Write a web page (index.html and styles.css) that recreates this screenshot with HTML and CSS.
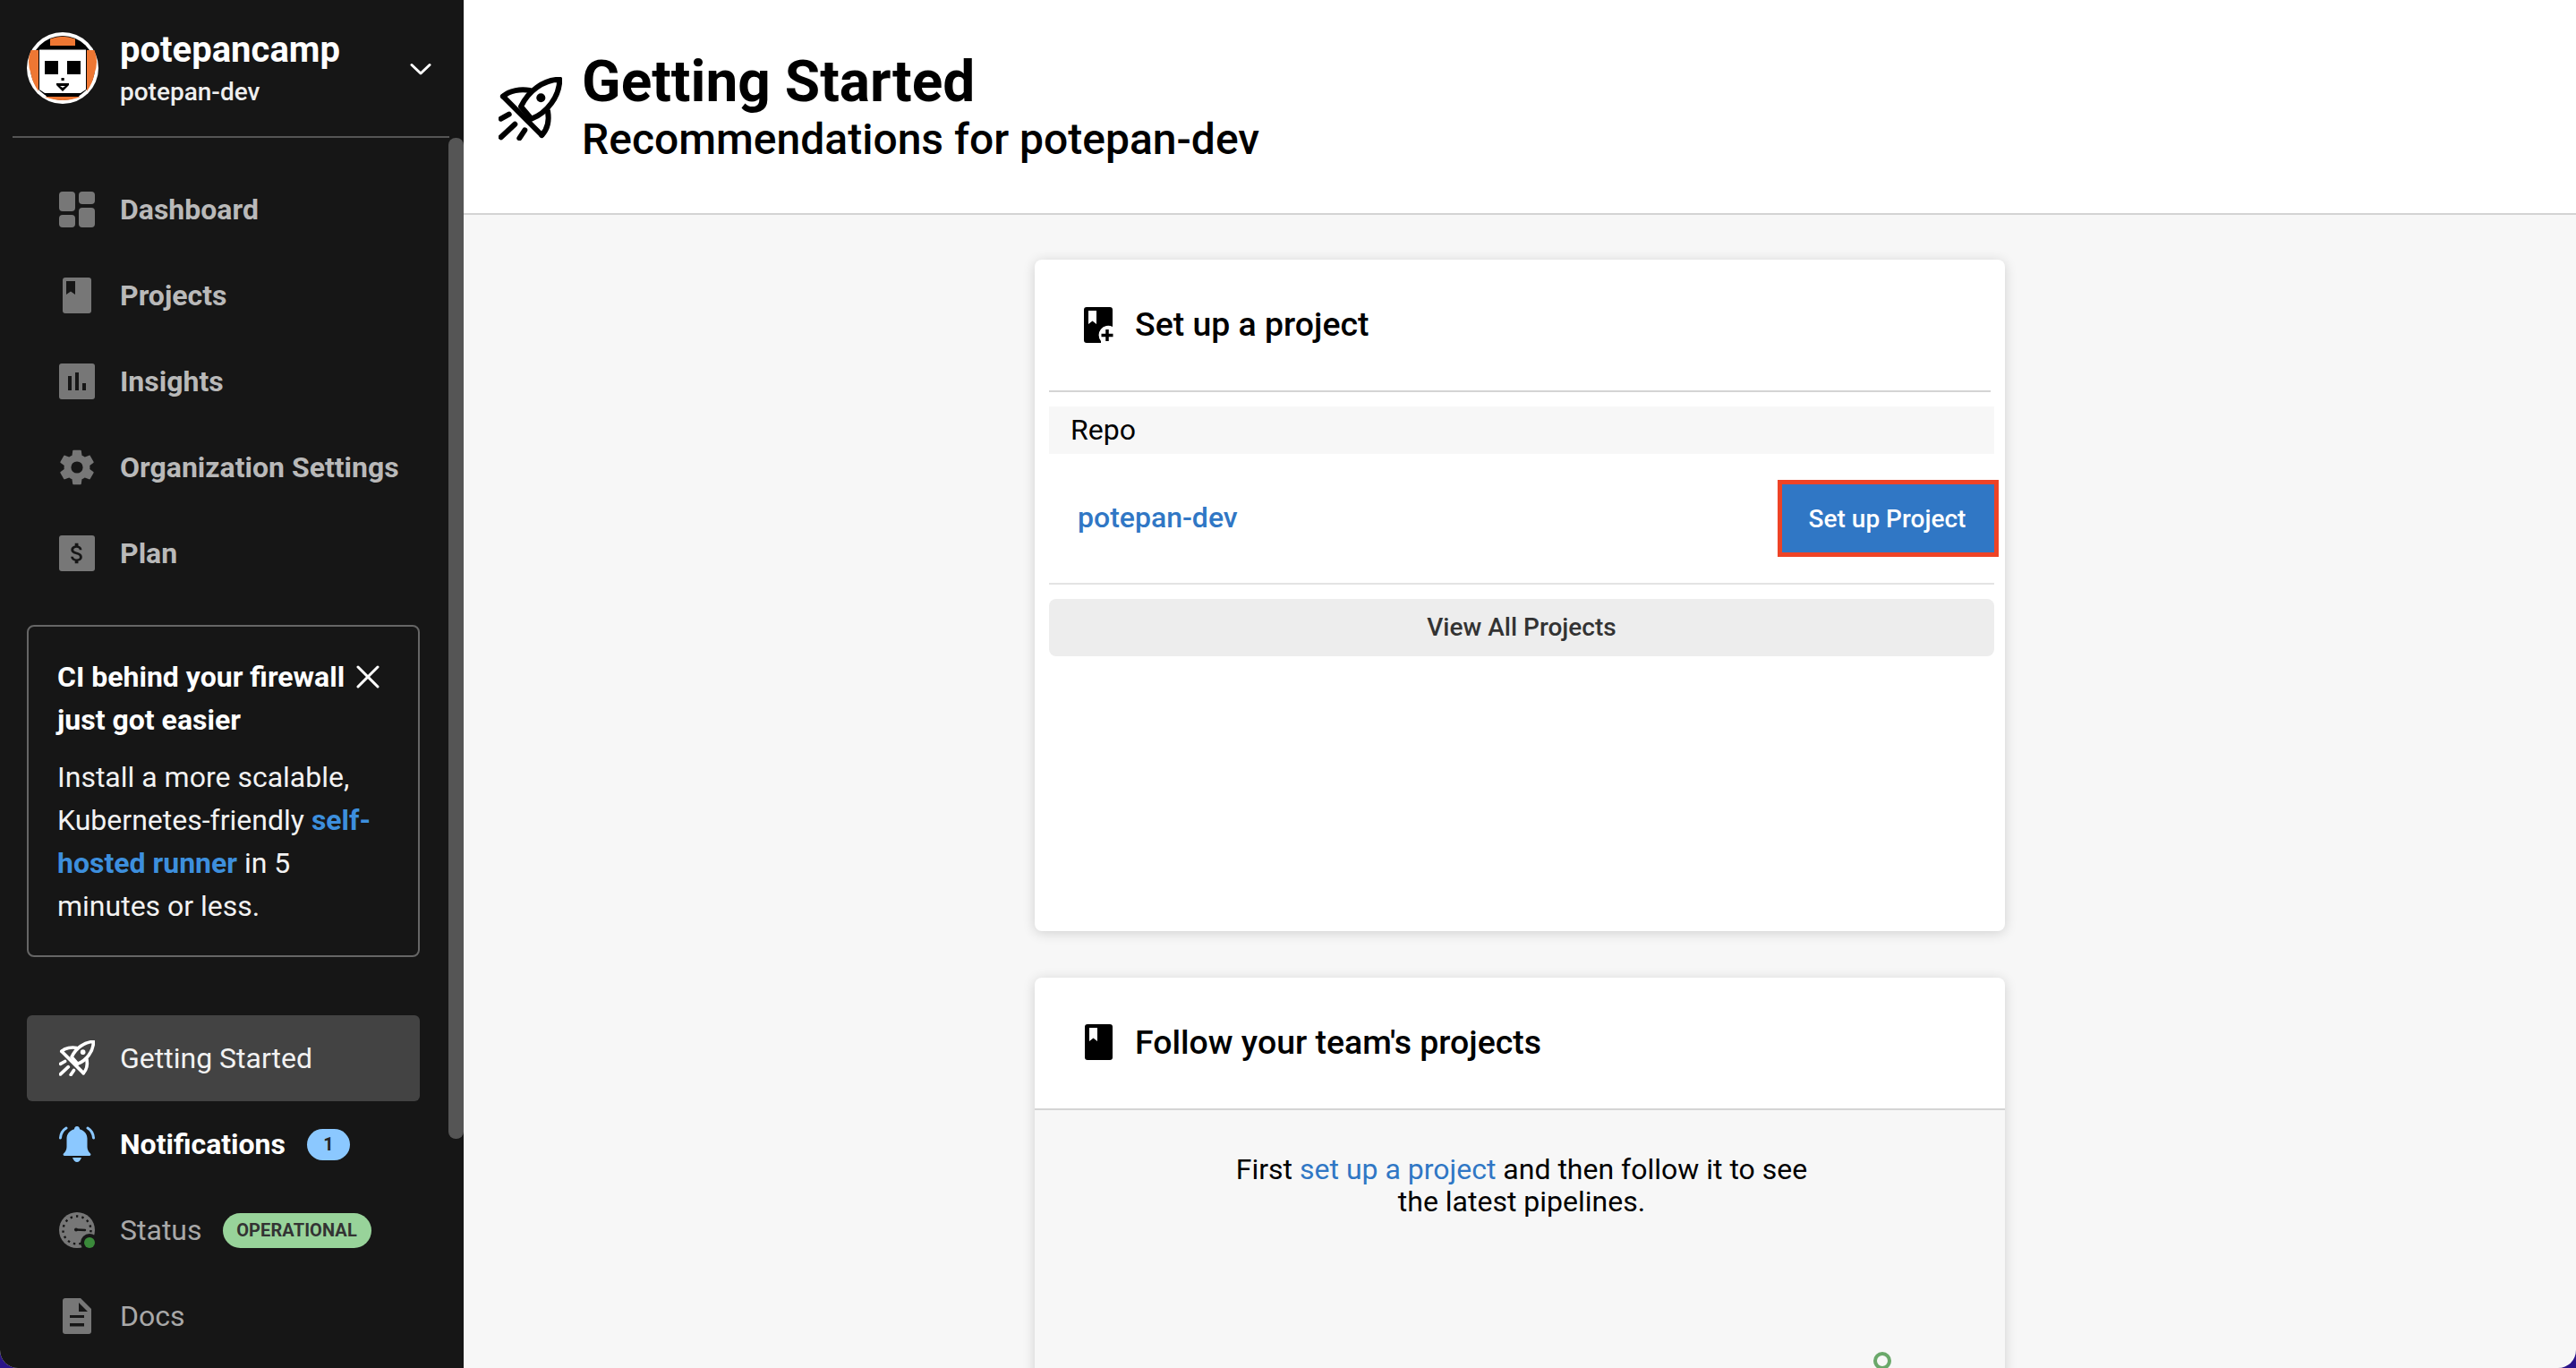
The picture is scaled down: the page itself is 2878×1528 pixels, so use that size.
FILE: index.html
```html
<!DOCTYPE html>
<html lang="en">
<head>
<meta charset="utf-8">
<title>Getting Started</title>
<link rel="stylesheet" href="styles.css">
</head>
<body>
<svg class="defs" width="0" height="0" aria-hidden="true">
  <symbol id="rocket" viewBox="0 0 71 71">
    <g fill="none" stroke="currentColor" stroke-linecap="round" stroke-linejoin="round">
      <path d="M68.300 2.700C50 3 33 16 25 33L36.700 46.700C54 40 68 22 68.300 2.700Z"/>
      <path d="M5 21.700L48.300 65"/>
      <path d="M5 21.700C12 15 25 13 35 15"/>
      <path d="M48.300 65C55 58 57 50 55 38"/>
      <path d="M2.700 46.700L11.700 41.700M2.700 67.300L18.300 52.700M23.300 68.300L29.300 59.300"/>
    </g>
    <circle cx="47.300" cy="23.300" r="5" fill="currentColor"/>
  </symbol>
</svg>
<div class="app">
  <aside class="sidebar">
    <header class="org">
      <svg class="org-logo" viewBox="0 0 80 80">
        <circle cx="40" cy="40" r="40" fill="#fff"/>
        <circle cx="40" cy="40" r="36" fill="#000"/>
        <path d="M13 20H4.500A36 36 0 0 0 4.500 46Q6 56 13 66Z" fill="#ee7733"/>
        <path d="M67 20H75.500A36 36 0 0 1 75.500 46Q74 56 67 66Z" fill="#ee7733"/>
        <path d="M26 7.500Q40 2 54 7.500V15H26Z" fill="#ee7733"/>
        <path d="M14 19.500H66V64H14Z" fill="#fff"/>
        <path d="M20 68L60 68L58 72H22Z" fill="#000"/>
        <path d="M14 64H66L60 68H20Z" fill="#fff"/>
        <path d="M20 72H60Q50 76 40 76T20 72Z" fill="#ee7733"/>
        <path d="M20 32H35V47H20ZM45 32H60V47H45ZM38.500 51H41.700V54H38.500ZM33 57H47V59L40 66L33 59Z" fill="#000"/>
        <path d="M37 60H43L40 62Z" fill="#fff"/>
      </svg>
      <div class="org-text">
        <div class="org-name">potepancamp</div>
        <div class="org-sub">potepan-dev</div>
      </div>
      <svg class="org-chevron" viewBox="0 0 24 15"><path d="M2 2.500L12 12L22 2.500" fill="none" stroke="#fff" stroke-width="3" stroke-linecap="round" stroke-linejoin="round"/></svg>
    </header>
    <div class="scroll-thumb"></div>
    <nav class="nav nav-main">
      <a class="nav-item nav-strong">
        <svg class="nav-icon" viewBox="0 0 40 40"><g fill="#777"><rect width="18" height="22" rx="4"/><rect x="22" width="18" height="14" rx="4"/><rect y="26" width="18" height="14" rx="4"/><rect x="22" y="18" width="18" height="22" rx="4"/></g></svg>
        <span>Dashboard</span>
      </a>
      <a class="nav-item nav-strong">
        <svg class="nav-icon" viewBox="0 0 40 40"><rect x="4" width="32" height="40" rx="3" fill="#777"/><path d="M8 4H18V19L13 15.500L8 19Z" fill="#161616"/></svg>
        <span>Projects</span>
      </a>
      <a class="nav-item nav-strong">
        <svg class="nav-icon" viewBox="0 0 40 40"><rect width="40" height="40" rx="3" fill="#777"/><path d="M10 14H14V30H10ZM18 10H22V30H18ZM26 22H30V30H26Z" fill="#161616"/></svg>
        <span>Insights</span>
      </a>
      <a class="nav-item nav-strong">
        <svg class="nav-icon" viewBox="2.300 2 19.400 20"><path fill="#777" d="M19.140 12.940c.04-.3.06-.61.06-.94 0-.32-.02-.64-.07-.94l2.030-1.580c.18-.14.23-.41.12-.61l-1.920-3.320c-.12-.22-.37-.29-.59-.22l-2.390.96c-.5-.38-1.030-.7-1.620-.94l-.36-2.540c-.04-.24-.24-.41-.48-.41h-3.840c-.24 0-.43.17-.47.41l-.36 2.540c-.59.24-1.130.57-1.620.94l-2.390-.96c-.22-.08-.47 0-.59.22L2.740 8.870c-.12.21-.08.47.12.61l2.030 1.580c-.05.3-.09.63-.09.94s.02.64.07.94l-2.030 1.580c-.18.14-.23.41-.12.61l1.920 3.320c.12.22.37.29.59.22l2.390-.96c.5.38 1.030.7 1.620.94l.36 2.540c.05.24.24.41.48.41h3.840c.24 0 .44-.17.47-.41l.36-2.540c.59-.24 1.130-.56 1.620-.94l2.390.96c.22.08.47 0 .59-.22l1.920-3.320c.12-.22.07-.47-.12-.61l-2.010-1.580z"/><circle cx="12" cy="12" r="3.300" fill="#161616"/></svg>
        <span>Organization Settings</span>
      </a>
      <a class="nav-item nav-strong">
        <svg class="nav-icon" viewBox="0 0 40 40"><rect width="40" height="40" rx="3" fill="#777"/><path transform="translate(5.200 5) scale(1.250)" fill="#161616" d="M11.800 10.900c-2.270-.59-3-1.200-3-2.150 0-1.090 1.010-1.850 2.700-1.850 1.780 0 2.440.85 2.500 2.100h2.210c-.07-1.720-1.120-3.300-3.210-3.810V3h-3v2.160c-1.940.42-3.500 1.680-3.500 3.610 0 2.310 1.910 3.460 4.700 4.130 2.500.6 3 1.480 3 2.410 0 .69-.49 1.790-2.700 1.790-2.060 0-2.870-.92-2.980-2.100h-2.200c.12 2.190 1.760 3.420 3.680 3.830V21h3v-2.150c1.950-.37 3.500-1.500 3.500-3.550 0-2.840-2.430-3.810-4.700-4.400z"/></svg>
        <span>Plan</span>
      </a>
    </nav>
    <section class="promo">
      <div class="promo-head">
        <strong class="promo-title">CI behind your firewall just got easier</strong>
        <svg class="promo-close" viewBox="0 0 26 26"><path d="M2 2L24 24M24 2L2 24" stroke="#fff" stroke-width="3" stroke-linecap="round"/></svg>
      </div>
      <p class="promo-body">Install a more scalable, Kubernetes-friendly <a class="promo-link">self-hosted runner</a> in 5 minutes or less.</p>
    </section>
    <nav class="nav nav-bottom">
      <a class="nav-item nav-active">
        <svg class="nav-icon nav-rocket"><use href="#rocket"/></svg>
        <span>Getting Started</span>
      </a>
      <a class="nav-item nav-notify">
        <svg class="nav-icon" viewBox="0 0 40 40"><path fill="#8bc8ff" d="M20 0c-2 0-3 1.500-3 3.200C11 5 8.500 9 8.500 14v9c0 3-1.500 5.500-3.500 7.500-.8.8-.5 2.500 1 2.500h28c1.500 0 1.800-1.700 1-2.500-2-2-3.500-4.500-3.500-7.500v-9c0-5-2.500-9-8.500-10.800C23 1.500 22 0 20 0zM15 35h10c-1 3-3 5-5 5s-4-2-5-5z"/><path d="M8 2C4 4.500 1.800 8.500 1.500 13M32 2C36 4.500 38.200 8.500 38.500 13" fill="none" stroke="#8bc8ff" stroke-width="3" stroke-linecap="round"/></svg>
        <span>Notifications</span>
        <span class="badge badge-count">1</span>
      </a>
      <a class="nav-item nav-plain">
        <svg class="nav-icon" viewBox="0 0 40 40"><circle cx="20" cy="20" r="20" fill="#777"/><circle cx="20" cy="20" r="15.500" fill="none" stroke="#161616" stroke-width="2.400" stroke-dasharray="2.400 4.100"/><path d="M19 19.500L29 20" stroke="#161616" stroke-width="2.400" stroke-linecap="round"/><circle cx="19" cy="19.500" r="2" fill="#161616"/><circle cx="34" cy="34" r="10" fill="#161616"/><circle cx="34" cy="34" r="6" fill="#3a8a3a"/></svg>
        <span>Status</span>
        <span class="badge badge-status">OPERATIONAL</span>
      </a>
      <a class="nav-item nav-plain">
        <svg class="nav-icon" viewBox="0 0 40 40"><path fill="#777" d="M7 0H24L36 12V37A3 3 0 0 1 33 40H7A3 3 0 0 1 4 37V3A3 3 0 0 1 7 0Z"/><path fill="#161616" d="M22 5V15H32ZM12 19H28V22H12ZM12 28H28V31.500H12Z"/></svg>
        <span>Docs</span>
      </a>
    </nav>
  </aside>
  <main class="main">
    <header class="page-head">
      <svg class="page-icon"><use href="#rocket"/></svg>
      <div class="page-titles">
        <h1 class="page-title">Getting Started</h1>
        <h2 class="page-sub">Recommendations for potepan-dev</h2>
      </div>
    </header>
    <div class="content">
      <section class="card card-setup">
        <header class="setup-head">
          <svg class="card-icon" viewBox="0 0 37 40"><path d="M3 0H29A3 3 0 0 1 32 3V22A10.500 10.500 0 0 0 19 38V40H3A3 3 0 0 1 0 37V3A3 3 0 0 1 3 0Z" fill="#000"/><path d="M5 4H14V19L9.500 15.500L5 19Z" fill="#fff"/><path d="M26 25V38M19.500 31.500H32.500" stroke="#000" stroke-width="3.500" fill="none"/></svg>
          <h3 class="card-title card-title-setup">Set up a project</h3>
        </header>
        <div class="setup-rule"></div>
        <div class="repo-band">Repo</div>
        <div class="repo-row">
          <a class="repo-link">potepan-dev</a>
          <button class="btn-primary" type="button">Set up Project</button>
        </div>
        <div class="repo-rule"></div>
        <button class="btn-wide" type="button">View All Projects</button>
      </section>
      <section class="card card-follow">
        <header class="follow-head">
          <svg class="card-icon-follow" viewBox="0 0 31 40"><rect width="31" height="40" rx="3" fill="#000"/><path d="M5 4H14V19L9.500 15.500L5 19Z" fill="#fff"/></svg>
          <h3 class="card-title">Follow your team's projects</h3>
        </header>
        <div class="follow-body">
          <p class="follow-text">First <a class="follow-link">set up a project</a> and then follow it to see the latest pipelines.</p>
          <svg class="follow-art" viewBox="0 0 20 20"><circle cx="10" cy="10" r="8" fill="none" stroke="#6aa86a" stroke-width="4"/></svg>
        </div>
      </section>
    </div>
  </main>
</div>
</body>
</html>
```

FILE: styles.css
```css
* { box-sizing: border-box; }
html, body { margin: 0; height: 100%; overflow: hidden; background: #2a1488; }
body { font-family: Roboto, "Liberation Sans", sans-serif; color: #000; }
.defs { position: absolute; }
.app { display: flex; height: 1528px; border-radius: 0 0 20px 20px; overflow: hidden; background: #f7f7f7; }

.sidebar { position: relative; flex: 0 0 518px; width: 518px; height: 100%; background: #161616; color: #fff; overflow: hidden; }
.org { display: flex; align-items: center; height: 154px; margin: 0 16px 0 14px; padding: 0 0 2px 16px; border-bottom: 2px solid #555; gap: 24px; }
.org-logo { flex: none; width: 80px; height: 80px; margin-top: 2px; }
.org-text { flex: 1; margin-top: 5px; }
.org-name { font-size: 40px; line-height: 48px; font-weight: 700; }
.org-sub { margin-top: 3px; font-size: 28px; line-height: 40px; font-weight: 500; color: #eee; }
.org-chevron { flex: none; width: 24px; height: 15px; margin: 4px 20px 0 0; }
.scroll-thumb { position: absolute; left: 501px; top: 154px; width: 17px; height: 1118px; background: #555; border-radius: 8px; }

.nav { display: flex; flex-direction: column; padding: 0 49px 0 30px; }
.nav-main { margin-top: 32px; }
.nav-item { display: flex; align-items: center; height: 96px; padding-left: 36px; font-size: 32px; border-radius: 6px; }
.nav-icon { flex: none; width: 40px; height: 40px; margin-right: 28px; }
.nav-strong { color: #b9b9b9; font-weight: 700; }
.nav-active { background: #434343; color: #f2f2f2; }
.nav-rocket { color: #fff; stroke-width: 6.500px; }
.nav-notify { color: #fff; font-weight: 700; }
.nav-plain { color: #a8a8a8; }

.badge { display: inline-flex; align-items: center; justify-content: center; border-radius: 20px; font-weight: 700; }
.badge-count { width: 48px; height: 35px; margin-left: 24px; background: #8bc8ff; color: #222; font-size: 20px; }
.badge-status { width: 166px; height: 39px; margin-left: 23px; background: #98d39a; color: #333; font-size: 20px; letter-spacing: 0.1px; }

.promo { margin: 32px 49px 65px 30px; padding: 32px 32px 0 32px; height: 371px; border: 2px solid #666; border-radius: 8px; }
.promo-head { display: flex; align-items: flex-start; }
.promo-title { flex: 0 0 334px; font-size: 32px; line-height: 48px; font-weight: 700; }
.promo-close { flex: none; width: 26px; height: 26px; margin: 11px 0 0 0; }
.promo-body { margin: 16px 0 0; font-size: 32px; line-height: 48px; color: #f2f2f2; width: 372px; }
.promo-link { color: #3d8fdd; font-weight: 700; }

.main { flex: 1; min-width: 0; height: 100%; overflow: hidden; }
.page-head { display: flex; align-items: center; height: 240px; padding-left: 39px; background: #fff; border-bottom: 2px solid #d4d4d4; gap: 22px; }
.page-icon { flex: none; width: 71px; height: 71px; margin-top: 4px; color: #000; stroke-width: 6px; }
.page-titles { margin-top: 2px; }
.page-title { margin: 0; font-size: 64px; line-height: 72px; font-weight: 700; }
.page-sub { margin: 0; font-size: 48px; line-height: 56px; font-weight: 500; }

.content { display: flex; flex-direction: column; align-items: center; padding-top: 50px; gap: 52px; }
.card { width: 1084px; background: #fff; border-radius: 8px; box-shadow: 0 2px 14px rgba(0,0,0,.16); overflow: hidden; }
.card-setup { height: 750px; padding: 0 12px 0 16px; }
.setup-head { display: flex; align-items: center; height: 146px; padding-left: 39px; gap: 20px; }
.card-icon { flex: none; width: 37px; height: 40px; }
.card-title { margin: 0; font-size: 37.440px; line-height: 48px; font-weight: 500; }
.card-title-setup { margin-top: -2px; }
.setup-rule { height: 2px; margin-right: 4px; background: #d4d4d4; }
.repo-band { height: 53px; margin-top: 16px; padding-left: 24px; background: #f7f7f7; font-size: 32px; line-height: 53px; }
.repo-row { display: flex; align-items: center; justify-content: space-between; height: 144px; padding-left: 32px; }
.repo-link { margin-top: -3px; color: #3077c5; font-size: 32px; font-weight: 500; }
.btn-primary { width: 237px; height: 76px; padding: 0 2px 0 0; border: 0; background: #3077c5; color: #fff; font: 500 28px Roboto, sans-serif; outline: 5px solid #ee4326; }
.repo-rule { height: 2px; background: #e3e3e3; }
.btn-wide { display: block; width: 100%; height: 64px; margin-top: 16px; padding: 0 0 2px; border: 0; border-radius: 8px; background: #ededed; color: #333; font: 500 28px Roboto, sans-serif; }

.follow-head { display: flex; align-items: center; height: 148px; padding: 0 0 2px 56px; gap: 25px; border-bottom: 2px solid #d4d4d4; }
.card-icon-follow { flex: none; width: 31px; height: 40px; }
.follow-body { display: flex; flex-direction: column; align-items: center; height: 400px; padding-top: 48px; background: #f7f7f7; }
.follow-text { width: 660px; margin: 0 0 0 4px; font-size: 32px; line-height: 36px; text-align: center; }
.follow-link { color: #3077c5; }
.follow-art { align-self: flex-end; width: 20px; height: 20px; margin: 150px 127px 0 0; }
```
